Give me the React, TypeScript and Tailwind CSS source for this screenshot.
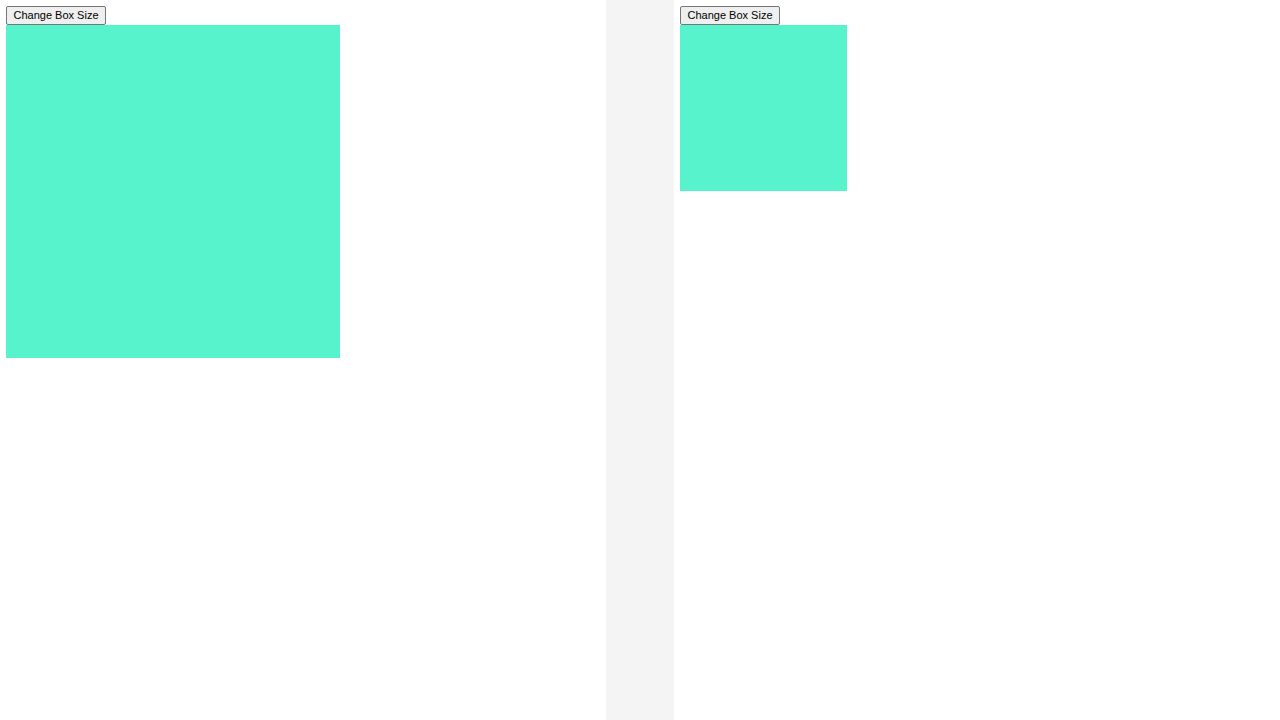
import { useState } from 'react';

function Panel({ initial }: { initial: number }) {
  const [size, setSize] = useState(initial);

  return (
    <div className="flex-1 bg-white p-[6px]">
      <button
        onClick={() => setSize(size === initial ? initial / 2 : initial)}
        className="block h-[19px] w-[100px] px-[6px] bg-[#efefef] border border-[#767676] rounded-[2px] text-[11px] leading-none text-black font-['Liberation_Sans',Arial,sans-serif]"
      >
        Change Box Size
      </button>
      <div className="bg-[#57f3cc]" style={{ width: size, height: size - 1 }} />
    </div>
  );
}

export default function App() {
  return (
    <div className="flex h-[720px] w-full bg-[#f4f4f4] gap-[68px]">
      <Panel initial={334} />
      <Panel initial={167} />
    </div>
  );
}
